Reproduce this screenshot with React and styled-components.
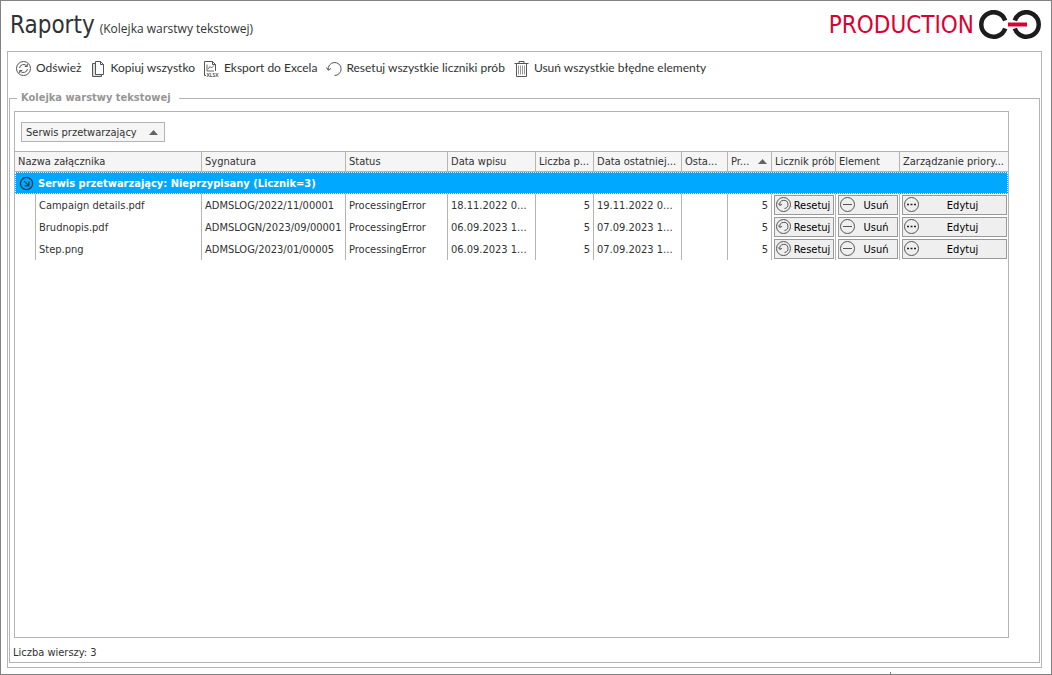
import React from "react";
import styled, { createGlobalStyle } from "styled-components";

const Global = createGlobalStyle`
  * {
    box-sizing: border-box;
  }
  body {
    margin: 0;
    background: #fff;
    color: #323232;
    font-family: "DejaVu Sans Condensed", "DejaVu Sans", sans-serif;
    font-size: 11px;
  }
  button {
    font: inherit;
    color: inherit;
  }
`;

const Window = styled.div`
  display: flex;
  flex-direction: column;
  height: 100vh;
  border: 1px solid #828282;
  padding: 0 9px 0 6px;
`;

const Header = styled.header`
  display: flex;
  align-items: center;
  justify-content: space-between;
  height: 48px;
  margin-bottom: 2px;
  padding: 0 1px 0 3px;
`;

const Title = styled.h1`
  margin: 0;
  padding-top: 3px;
  font-size: 24px;
  line-height: 30px;
  font-weight: normal;
`;

const Subtitle = styled.small`
  margin-left: 5px;
  font-family: "Open Sans", sans-serif;
  font-size: 12px;
`;

const Brand = styled.div`
  display: flex;
  align-items: center;
  gap: 5px;
  color: #dc0032;
  font-size: 24px;
  line-height: 30px;
`;

const Panel = styled.main`
  flex: 1;
  display: flex;
  flex-direction: column;
  border: 1px solid #b4b4b4;
  padding: 0 1px 4px;
`;

const Toolbar = styled.div`
  display: flex;
  align-items: center;
  gap: 9px;
  height: 34px;
  margin-bottom: 4px;
  padding-left: 7px;
`;

const ToolButton = styled.button`
  display: flex;
  align-items: center;
  gap: 4px;
  border: 0;
  padding: 0;
  background: none;
  font-family: Lato, sans-serif;
  font-size: 12px;
  line-height: 14px;
  white-space: nowrap;

  span {
    padding-bottom: 2px;
  }
`;

const Group = styled.fieldset`
  flex: 1;
  display: grid;
  grid-template-rows: 1fr auto;
  min-width: 0;
  margin: 0;
  border: 1px solid #b4b4b4;
  padding: 4px 30px 0 4px;
`;

const Legend = styled.legend`
  margin-left: 3px;
  padding: 0 8px 2px 4px;
  color: #969696;
  font-weight: bold;
  line-height: 15px;
`;

const Grid = styled.section`
  border: 1px solid #b4b4b4;
`;

const GroupBar = styled.div`
  display: flex;
  align-items: center;
  height: 39px;
  padding: 1px 6px 0;
`;

const GroupChip = styled.button`
  display: flex;
  align-items: center;
  gap: 12px;
  height: 20px;
  border: 1px solid #b4b4b4;
  padding: 0 6px 0 4px;
  background: #f5f5f5;
`;

const Table = styled.table`
  width: 100%;
  table-layout: fixed;
  border-collapse: separate;
  border-spacing: 0;
`;

const Th = styled.th`
  height: 21px;
  border: solid #b4b4b4;
  border-width: 1px 1px 1px 0;
  padding: 0 0 0 3px;
  background: #f5f5f5;
  font-weight: normal;
  text-align: left;
  white-space: nowrap;
  overflow: hidden;

  &:last-child {
    border-right: 0;
  }
`;

const SortedHead = styled.div`
  display: flex;
  align-items: center;
  justify-content: space-between;
  padding-right: 4px;
`;

const GroupCell = styled.td`
  height: 22px;
  padding: 0 4px;
  background: #00a8ff;
  color: #fff;
  font-weight: bold;
  outline: 1px dotted #fff;
  outline-offset: -1px;
`;

const GroupLabel = styled.div`
  display: flex;
  align-items: center;
  gap: 4px;
`;

const Td = styled.td`
  height: 22px;
  border-right: 1px solid #b4b4b4;
  padding: 0 3px;
  text-align: ${(p) => (p.$number ? "right" : "left")};
  white-space: nowrap;
  overflow: hidden;

  &:last-child {
    border-right: 0;
  }
`;

const ButtonCell = styled(Td)`
  padding: 1px 1px 1px 2px;
`;

const RowButton = styled.button`
  display: flex;
  align-items: center;
  width: 100%;
  height: 20px;
  border: 1px solid #999;
  padding: 0 1px;
  background: #efefef;
  color: #000;

  span {
    flex: 1;
    text-align: center;
  }
`;

const RowCount = styled.footer`
  height: 24px;
  margin-left: -1px;
  padding-top: 6px;
  line-height: 18px;
`;

const BottomStrip = styled.div`
  display: flex;
  justify-content: flex-end;
  align-items: flex-end;
  height: 6px;
  padding-right: 151px;
`;

const Tick = styled.span`
  width: 1px;
  height: 2px;
  background: #828282;
`;

const IconSvg = styled.svg`
  flex-shrink: 0;
  fill: none;
  stroke: #555;
  overflow: visible;

  text {
    fill: #555;
    stroke: none;
    font-size: 5px;
    font-weight: bold;
  }
`;

const Icon = ({ children }) => (
  <IconSvg width="16" height="16" viewBox="0 0 16 16" aria-hidden="true">
    {children}
  </IconSvg>
);

const RefreshIcon = () => (
  <Icon>
    <circle cx="7.5" cy="7.5" r="7" />
    <path d="M3.5 7a4.1 4.1 0 0 1 7.4-1.8M11.5 8a4.1 4.1 0 0 1-7.4 1.8M11.3 3v2.5H8.8M3.7 12V9.5h2.5" />
  </Icon>
);

const CopyIcon = () => (
  <Icon>
    <path d="M4.5 2.5h-3v13h9v-2h-6z" fill="#ddd" />
    <path d="M4.5.5h5l3 3v10h-8V.5zM9.5.5v3h3" fill="#fff" />
  </Icon>
);

const ExcelIcon = () => (
  <Icon>
    <path d="M2 14.5H.5V.5h8l3 3V10M8.5.5v3h3" />
    <path d="M3 3.5V10h7M4 8l2-2.5L7.5 7 10 4.5" strokeWidth="0.9" />
    <text x="2.5" y="16">
      XLSX
    </text>
  </Icon>
);

const UndoIcon = () => (
  <Icon>
    <path d="M2.2 9A6.5 6.5 0 1 1 8.5 14.5" />
    <path d="M.5 6.5l1.7 2.7L5 7.500" />
  </Icon>
);

const TrashIcon = () => (
  <Icon>
    <path d="M.5 2.5h14M5 2V.5h5V2M2.5 2.5v13h10v-13" />
    <path d="M4.5 4.5v9M6.5 4.5v9M8.5 4.5v9M10.5 4.5v9" stroke="#999" />
  </Icon>
);

const ResetIcon = () => (
  <Icon>
    <circle cx="7.5" cy="7.5" r="7" />
    <path d="M3.8 8A4.1 4.1 0 1 1 8.5 11.5M2.3 6.5l1.5 2L6 7.300" />
  </Icon>
);

const MinusIcon = () => (
  <Icon>
    <circle cx="7.5" cy="7.5" r="7" />
    <path d="M3 7.5h9" />
  </Icon>
);

const DotsIcon = () => (
  <Icon>
    <circle cx="7.5" cy="7.5" r="7" />
    <path d="M3 7.5h2M6.5 7.5h2M10 7.5h2" stroke="#222" strokeWidth="1.6" />
  </Icon>
);

const ExpandedIcon = () => (
  <svg width="15" height="15" viewBox="0 0 16 16" fill="none" stroke="#0f3c5a" strokeWidth="1.4">
    <circle cx="8" cy="8" r="6.5" />
    <path d="M5.5 5.5l5 5M10.5 6v4.5H6" />
  </svg>
);

const SortArrow = () => (
  <svg width="9" height="5" viewBox="0 0 9 5" fill="#646464">
    <path d="M4.5 0L9 5H0z" />
  </svg>
);

const Logo = () => (
  <svg width="62" height="30" viewBox="0 0 62 30" fill="none" stroke="#1c1c1e" strokeWidth="4.5">
    <path d="M26.2 10.5A12.3 12.3 0 1 0 26.2 18.5" />
    <path d="M35.8 10.5A12.3 12.3 0 1 1 35.8 18.5" />
    <path d="M29 14.5h19" stroke="#dc0032" strokeWidth="4" />
  </svg>
);

const tools = [
  { label: "Odśwież", icon: RefreshIcon },
  { label: "Kopiuj wszystko", icon: CopyIcon },
  { label: "Eksport do Excela", icon: ExcelIcon },
  { label: "Resetuj wszystkie liczniki prób", icon: UndoIcon },
  { label: "Usuń wszystkie błędne elementy", icon: TrashIcon },
];

const columnWidths = [21, 166, 144, 102, 88, 58, 88, 46, 44, 64, 64];

const rows = [
  {
    name: "Campaign details.pdf",
    signature: "ADMSLOG/2022/11/00001",
    created: "18.11.2022 0...",
    last: "19.11.2022 0...",
  },
  {
    name: "Brudnopis.pdf",
    signature: "ADMSLOGN/2023/09/00001",
    created: "06.09.2023 1...",
    last: "07.09.2023 1...",
  },
  {
    name: "Step.png",
    signature: "ADMSLOG/2023/01/00005",
    created: "06.09.2023 1...",
    last: "07.09.2023 1...",
  },
];

const QueueTable = () => (
  <Table>
    <colgroup>
      {columnWidths.map((width, i) => (
        <col key={i} width={width} />
      ))}
      <col />
    </colgroup>
    <thead>
      <tr>
        <Th colSpan={2}>Nazwa załącznika</Th>
        <Th>Sygnatura</Th>
        <Th>Status</Th>
        <Th>Data wpisu</Th>
        <Th>Liczba p...</Th>
        <Th>Data ostatniej...</Th>
        <Th>Osta...</Th>
        <Th>
          <SortedHead>
            Pr...
            <SortArrow />
          </SortedHead>
        </Th>
        <Th>Licznik prób</Th>
        <Th>Element</Th>
        <Th>Zarządzanie priory...</Th>
      </tr>
    </thead>
    <tbody>
      <tr>
        <GroupCell colSpan={12}>
          <GroupLabel>
            <ExpandedIcon />
            Serwis przetwarzający: Nieprzypisany (Licznik=3)
          </GroupLabel>
        </GroupCell>
      </tr>
      {rows.map((row) => (
        <tr key={row.signature}>
          <Td />
          <Td>{row.name}</Td>
          <Td>{row.signature}</Td>
          <Td>ProcessingError</Td>
          <Td>{row.created}</Td>
          <Td $number>5</Td>
          <Td>{row.last}</Td>
          <Td />
          <Td $number>5</Td>
          <ButtonCell>
            <RowButton>
              <ResetIcon />
              <span>Resetuj</span>
            </RowButton>
          </ButtonCell>
          <ButtonCell>
            <RowButton>
              <MinusIcon />
              <span>Usuń</span>
            </RowButton>
          </ButtonCell>
          <ButtonCell>
            <RowButton>
              <DotsIcon />
              <span>Edytuj</span>
            </RowButton>
          </ButtonCell>
        </tr>
      ))}
    </tbody>
  </Table>
);

const App = () => (
  <>
    <Global />
    <Window>
      <Header>
        <Title>
          Raporty
          <Subtitle>(Kolejka warstwy tekstowej)</Subtitle>
        </Title>
        <Brand>
          PRODUCTION
          <Logo />
        </Brand>
      </Header>
      <Panel>
        <Toolbar>
          {tools.map(({ label, icon: ToolIcon }) => (
            <ToolButton key={label}>
              <ToolIcon />
              <span>{label}</span>
            </ToolButton>
          ))}
        </Toolbar>
        <Group>
          <Legend>Kolejka warstwy tekstowej</Legend>
          <Grid>
            <GroupBar>
              <GroupChip>
                Serwis przetwarzający
                <SortArrow />
              </GroupChip>
            </GroupBar>
            <QueueTable />
          </Grid>
          <RowCount>Liczba wierszy: {rows.length}</RowCount>
        </Group>
      </Panel>
      <BottomStrip>
        <Tick />
      </BottomStrip>
    </Window>
  </>
);

export default App;
